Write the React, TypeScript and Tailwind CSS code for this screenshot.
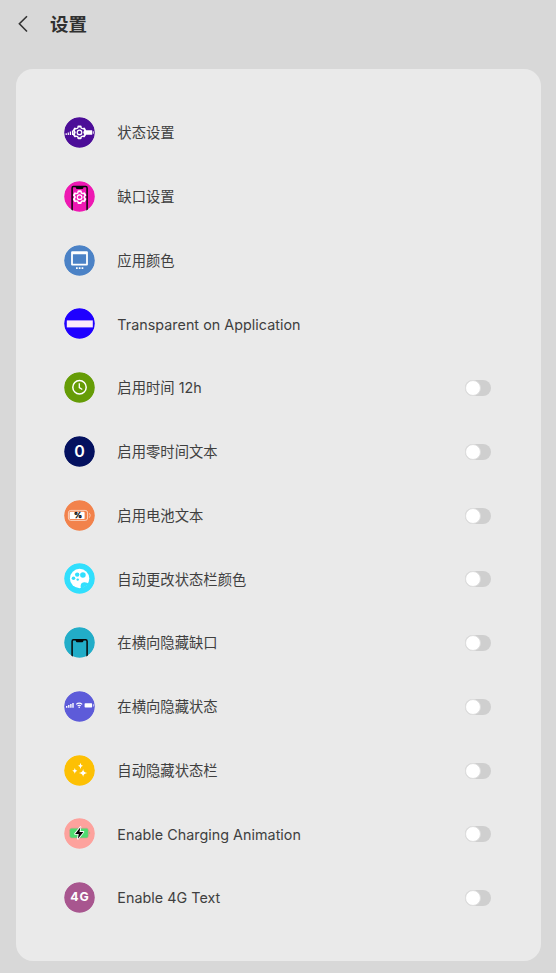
import { useState, type ReactNode } from 'react';

interface SettingItem {
  id: string;
  label: string;
  color: string;
  icon: ReactNode;
  toggle?: boolean;
}

const TEETH = [0, 60, 120, 180, 240, 300];

function Gear({ x, y, color }: { x: number; y: number; color: string }) {
  return (
    <g transform={`translate(${x} ${y})`}>
      {TEETH.map((angle) => (
        <rect key={angle} x="-2.1" y="-6.9" width="4.2" height="4" rx="1" fill="#fff" transform={`rotate(${angle})`} />
      ))}
      <circle r="5.5" fill="#fff" />
      {TEETH.map((angle) => (
        <path key={angle} d="M-1.3-3.3L-.9-4.9H.9L1.3-3.3z" fill={color} transform={`rotate(${angle})`} />
      ))}
      <circle r="3.8" fill={color} />
      <circle r="2.9" fill="#fff" />
      <circle r="1.6" fill={color} />
    </g>
  );
}

function PhoneFrame({ y }: { y: number }) {
  return (
    <g>
      <path d={`M8.1 31V${y + 2.2}q0-1.4 1.4-1.4h12.2q1.4 0 1.4 1.4V31`} fill="none" stroke="#080808" strokeWidth="1.5" />
      <path d={`M11.4 ${y + 0.5}h8.4l-.6 2q-.2.7-.9.7h-5.4q-.7 0-.9-.7z`} fill="#080808" />
    </g>
  );
}

const items: SettingItem[] = [
  {
    id: 'status',
    label: '状态设置',
    color: '#4c0d98',
    icon: (
      <>
        <path d="M1.6 16.3h1.2v1.7H1.6zM3.7 15.5h1.2V18H3.7zM5.8 14.6H7V18H5.8zM7.9 13.6h1.3V18H7.9zM9.6 13h1.7v5H9.6z" fill="#fff" />
        <path d="M20 13.2h8.2v4.6H20z" fill="#fff" />
        <path d="M28.8 14.3h.9v2.4h-.9z" fill="#fff" />
        <Gear x={15.5} y={15.4} color="#4c0d98" />
      </>
    ),
  },
  {
    id: 'notch',
    label: '缺口设置',
    color: '#ee18b2',
    icon: (
      <>
        <PhoneFrame y={4.8} />
        <Gear x={15.6} y={16.2} color="#ee18b2" />
      </>
    ),
  },
  {
    id: 'app-color',
    label: '应用颜色',
    color: '#4b82c6',
    icon: (
      <>
        <path d="M8.2 6.2h14.6q1.1 0 1.1 1.1v12.2q0 1.1-1.1 1.1H8.2q-1.1 0-1.1-1.1V7.3q0-1.1 1.1-1.1zM8.9 9.3v9.5h13.2V9.3z" fill="#fff" fillRule="evenodd" />
        <path d="M12 22.2h1.7v1.7H12zM14.8 22.2h1.7v1.7h-1.7zM17.6 22.2h1.7v1.7h-1.7z" fill="#fff" />
      </>
    ),
  },
  {
    id: 'transparent',
    label: 'Transparent on Application',
    color: '#1f00ff',
    icon: <rect x="2.8" y="12.4" width="26" height="7" fill="#fdeafb" />,
  },
  {
    id: 'time-12h',
    label: '启用时间 12h',
    color: '#659c06',
    toggle: true,
    icon: (
      <>
        <circle cx="15.5" cy="15.2" r="6.7" fill="none" stroke="#fff" strokeWidth="1.5" />
        <path d="M15.3 11.2v4.4l3 1.9" fill="none" stroke="#fff" strokeWidth="1.3" />
      </>
    ),
  },
  {
    id: 'zero-time',
    label: '启用零时间文本',
    color: '#04115f',
    toggle: true,
    icon: (
      <text x="15.5" y="20.9" textAnchor="middle" fill="#fff" className="font-['Inter',sans-serif] text-[16px] font-semibold">
        0
      </text>
    ),
  },
  {
    id: 'battery-text',
    label: '启用电池文本',
    color: '#f2824b',
    toggle: true,
    icon: (
      <>
        <rect x="4.4" y="10.4" width="19.2" height="10" rx="2.4" fill="none" stroke="#fde4d8" strokeWidth="0.8" />
        <rect x="5.6" y="11.7" width="15" height="7.4" rx="1.2" fill="#fff" />
        <path d="M25 13.2q1.2.5 1.2 2.2t-1.2 2.2" fill="none" stroke="#fde4d8" strokeWidth="0.7" />
        <text x="13.9" y="18.2" textAnchor="middle" fill="#000" stroke="#000" strokeWidth="0.3" className="font-['Inter',sans-serif] text-[7.8px] font-extrabold">
          %
        </text>
      </>
    ),
  },
  {
    id: 'auto-color',
    label: '自动更改状态栏颜色',
    color: '#31dffd',
    toggle: true,
    icon: (
      <>
        <circle cx="15.6" cy="15.5" r="9.7" fill="#fff" />
        <g fill="#31dffd">
          <circle cx="13.2" cy="11.6" r="2.2" />
          <circle cx="18.9" cy="12" r="2.8" />
          <circle cx="9.5" cy="15.3" r="1.8" />
          <circle cx="13.7" cy="16.6" r="1.2" />
          <path d="M17 26q-1-3 .1-5.2 1.2-1.7 3.4-1.5 2.6.2 4.6 1.8z" />
        </g>
      </>
    ),
  },
  {
    id: 'hide-notch',
    label: '在横向隐藏缺口',
    color: '#22adc8',
    toggle: true,
    icon: <PhoneFrame y={12} />,
  },
  {
    id: 'hide-status',
    label: '在横向隐藏状态',
    color: '#5d5bd9',
    toggle: true,
    icon: (
      <>
        <path d="M2 15h1.4v1.7H2zM4.1 14h1.4v2.7H4.1zM6.2 13h1.4v3.7H6.2zM8.3 11.9h1.4v4.8H8.3z" fill="#fff" />
        <path d="M12.2 13.4q3-2.5 6 0M13.6 14.9q1.6-1.3 3.2 0" fill="none" stroke="#fff" strokeWidth="1.2" />
        <circle cx="15.2" cy="16.2" r="0.8" fill="#fff" />
        <rect x="20.6" y="12.3" width="7.5" height="4.2" rx="0.7" fill="#fff" />
        <path d="M29 13.2h.9v2.4H29z" fill="#c9c8f4" />
      </>
    ),
  },
  {
    id: 'auto-hide',
    label: '自动隐藏状态栏',
    color: '#fdc004',
    toggle: true,
    icon: (
      <g fill="#fff">
        <path d="M19.1 13.7q.2 3.8 4.2 4.2-4 .4-4.2 4.2-.2-3.8-4.2-4.2 4-.4 4.2-4.2z" />
        <path d="M16.5 7.7q.2 2.8 2.5 3.1-2.3.3-2.5 3.1-.2-2.8-2.5-3.1 2.3-.3 2.5-3.1z" />
        <path d="M10.8 12.9q.2 2.6 2.6 2.9-2.4.3-2.6 2.9-.2-2.6-2.6-2.9 2.4-.3 2.6-2.9z" />
      </g>
    ),
  },
  {
    id: 'charging',
    label: 'Enable Charging Animation',
    color: '#fda29d',
    toggle: true,
    icon: (
      <>
        <rect x="5.7" y="10.2" width="18.6" height="9.7" rx="2" fill="#4edb70" stroke="#c3a58c" strokeWidth="0.6" />
        <path d="M25.2 13.2q1 .5 1 1.7t-1 1.7z" fill="#a9b77f" />
        <path d="M16.4 9.2l-5.3 6.7h3.6l-.8 4.8 5.5-6.8h-3.9z" fill="#050505" stroke="#fff" strokeWidth="1.8" strokeLinejoin="round" paintOrder="stroke" />
      </>
    ),
  },
  {
    id: 'text-4g',
    label: 'Enable 4G Text',
    color: '#a8568f',
    toggle: true,
    icon: (
      <text x="15.9" y="19.4" textAnchor="middle" fill="#fff" className="font-['Inter',sans-serif] text-[12.3px] font-bold tracking-[1px]">
        4G
      </text>
    ),
  },
];

function Toggle({ checked, onChange }: { checked: boolean; onChange: () => void }) {
  return (
    <button
      role="switch"
      aria-checked={checked}
      onClick={onChange}
      className={`mt-[1.2px] flex h-4 w-[26px] items-center rounded-full ${checked ? 'justify-end bg-green-500' : 'bg-[#cfcfcf]'}`}
    >
      <span className="size-4 rounded-full border border-[#dedede] bg-white" />
    </button>
  );
}

export default function App() {
  const [enabled, setEnabled] = useState<Record<string, boolean>>({});

  const toggle = (id: string) => setEnabled((prev) => ({ ...prev, [id]: !prev[id] }));

  return (
    <div className="h-[973px] w-[556px] bg-[#d8d8d8] font-['Inter','Noto_Sans_CJK_SC',sans-serif] text-[#3f3f3f]">
      {/* Header */}
      <header className="flex h-[69px] items-start pl-[17px] pt-[10px]">
        <svg width="14" height="28" viewBox="0 0 14 28" fill="none" stroke="#333" strokeWidth="1.6">
          <path d="M10 6.2L2.4 13.8l7.6 7.7" />
        </svg>
        <h1 className="ml-[19px] text-[18.5px] font-bold leading-7 text-[#303030]">设置</h1>
      </header>

      {/* Settings list */}
      <main className="ml-4 h-[892px] w-[525px] rounded-[17px] bg-[#eaeaea] pl-12 pr-[50.5px] pt-[31.7px]">
        {items.map((item) => (
          <div key={item.id} className="flex h-[63.75px] items-center">
            <svg width="31" height="31" viewBox="0 0 31 31" className="shrink-0 rounded-full">
              <circle cx="15.5" cy="15.5" r="15.3" fill={item.color} />
              {item.icon}
            </svg>
            <span className="ml-[22.3px] flex-1 pt-[1.6px] text-[14.3px] leading-5 tracking-[0.04px]">{item.label}</span>
            {item.toggle && <Toggle checked={!!enabled[item.id]} onChange={() => toggle(item.id)} />}
          </div>
        ))}
      </main>
    </div>
  );
}
